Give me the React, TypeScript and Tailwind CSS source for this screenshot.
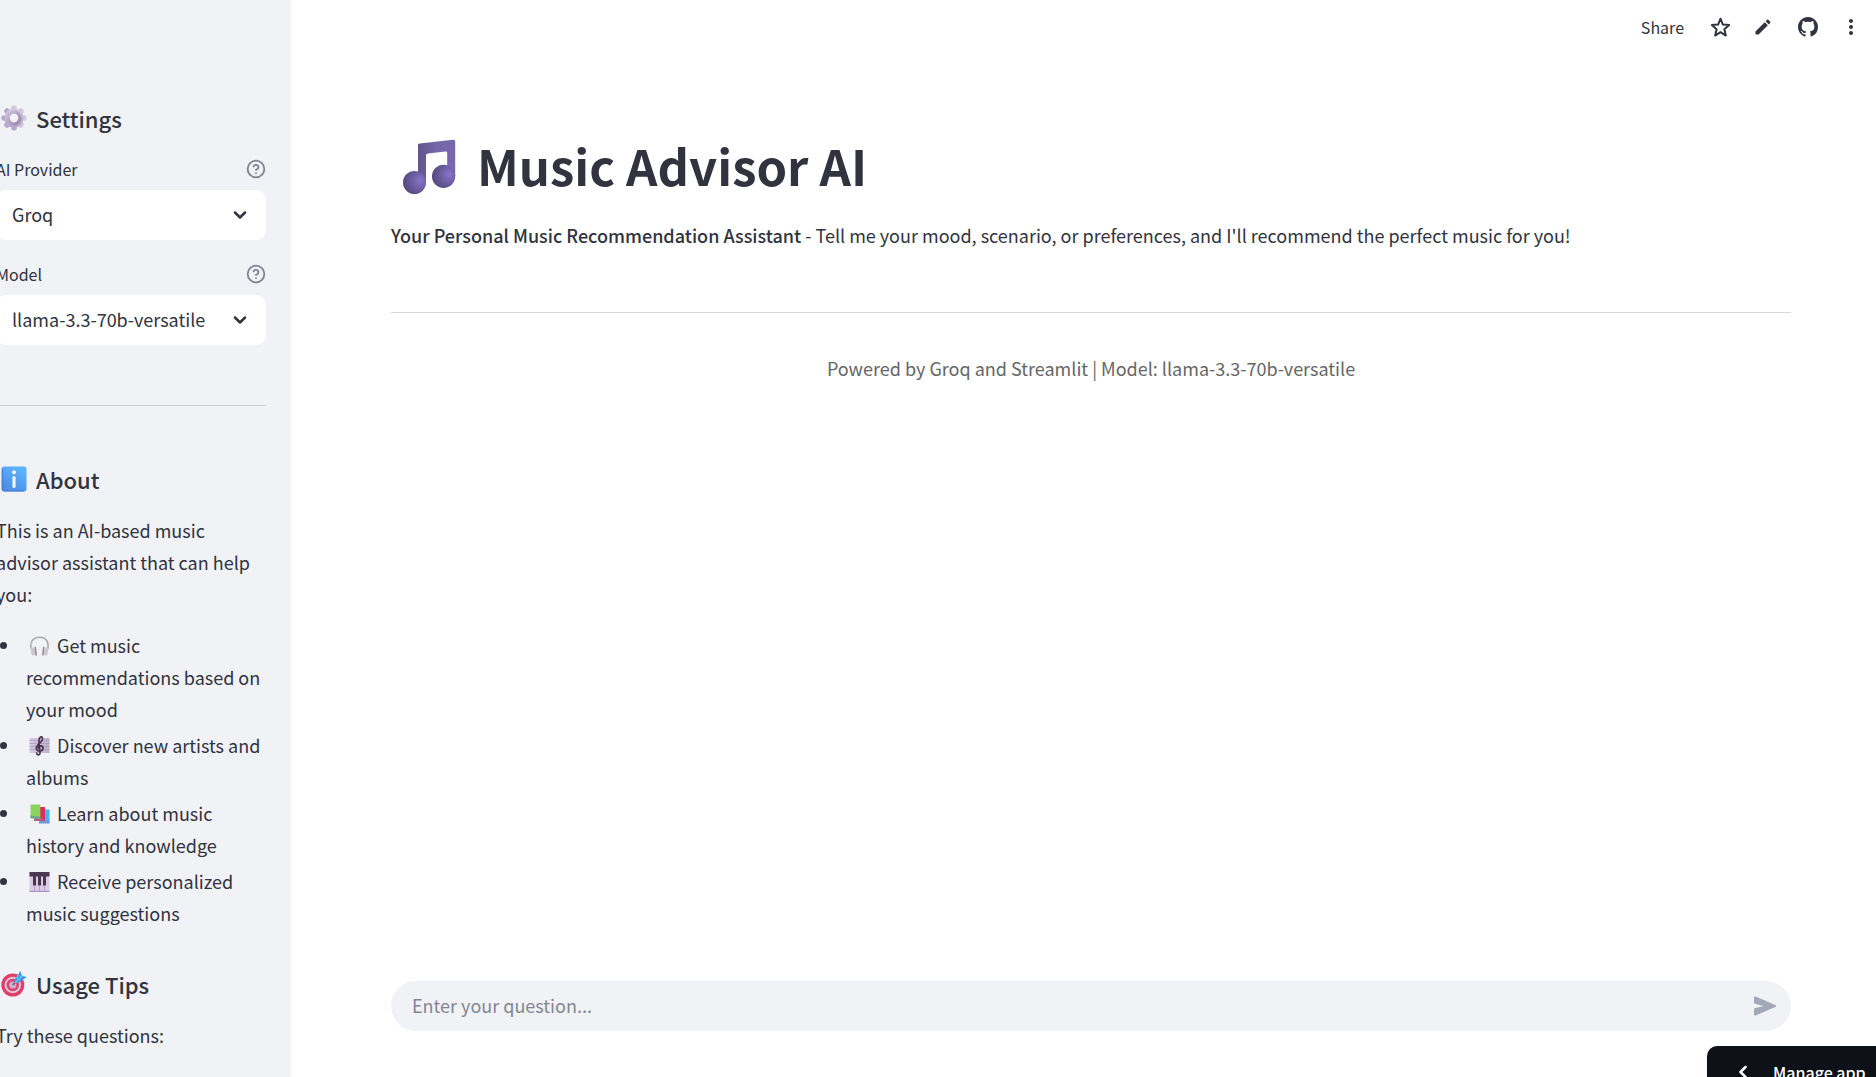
import { useState, type ReactNode } from "react";
import { ChevronDown, ChevronLeft, CircleHelp } from "lucide-react";
import { MdEdit, MdMoreVert } from "react-icons/md";

const MODELS = ["llama-3.3-70b-versatile", "llama-3.1-8b-instant"];
const PROVIDERS = ["Groq", "OpenAI"];

export default function App() {
  const [provider, setProvider] = useState(PROVIDERS[0]);
  const [model, setModel] = useState(MODELS[0]);
  const [question, setQuestion] = useState("");

  return (
    <div className="flex h-screen overflow-hidden bg-white font-['Noto_Sans_CJK_SC','Noto_Sans',sans-serif] text-[18px] leading-8 text-[#31333f]">
      <aside className="w-[291px] shrink-0 overflow-hidden bg-[#f0f2f6] pt-[103px] pr-[25px]">
        <div className="-ml-1">
          <SideHeading icon={<GearIcon />}>Settings</SideHeading>
          <div className="mt-6 space-y-[22px]">
            <Picker id="provider" label="AI Provider" value={provider} options={PROVIDERS} onChange={setProvider} />
            <Picker id="model" label="Model" value={model} options={MODELS} onChange={setModel} />
          </div>

          <hr className="mt-[60px] mb-[58px] border-[#cccfd6]" />

          <SideHeading icon={<InfoIcon />}>About</SideHeading>
          <p className="mt-5">This is an AI-based music advisor assistant that can help you:</p>
          <ul className="mt-[19px] mb-10 list-disc space-y-1 pl-[25px]">
            <Tip icon={<HeadphonesIcon />}>Get music recommendations based on your mood</Tip>
            <Tip icon={<ScoreIcon />}>Discover new artists and albums</Tip>
            <Tip icon={<BooksIcon />}>Learn about music history and knowledge</Tip>
            <Tip icon={<PianoIcon />}>Receive personalized music suggestions</Tip>
          </ul>

          <SideHeading icon={<TargetIcon />}>Usage Tips</SideHeading>
          <p className="mt-5">Try these questions:</p>
        </div>
      </aside>

      <div className="relative flex min-w-0 flex-1 flex-col">
        <header className="flex h-[54px] shrink-0 items-center justify-end gap-[21px] pr-[13px]">
          <button className="text-[16px] leading-6">Share</button>
          <button aria-label="Favorite" className="ml-1">
            <StarIcon />
          </button>
          <button aria-label="Edit">
            <MdEdit size={20} />
          </button>
          <button aria-label="View source" className="pl-1">
            <GithubIcon />
          </button>
          <button aria-label="Menu">
            <MdMoreVert size={24} />
          </button>
        </header>

        <main className="flex-1 pt-[78px] pr-[85px] pl-[100px]">
          <h1 className="flex items-center gap-[21px] pl-3 text-[49px] leading-[66px] font-bold">
            <NoteIcon />
            Music Advisor AI
          </h1>
          <p className="mt-[21px]">
            <strong className="font-medium">Your Personal Music Recommendation Assistant</strong> - Tell me your mood,
            scenario, or preferences, and I'll recommend the perfect music for you!
          </p>
          <hr className="mt-[61px] mb-[39px] border-[#d6d6d8]" />
          <p className="text-center text-[#666666]">Powered by {provider} and Streamlit | Model: {model}</p>
        </main>

        <form onSubmit={(e) => e.preventDefault()} className="pr-[85px] pb-[46px] pl-[100px]">
          <div className="flex h-[50px] items-center rounded-full bg-[#f0f2f6] pr-[13px] pl-[21px]">
            <input
              aria-label="Question"
              value={question}
              onChange={(e) => setQuestion(e.target.value)}
              placeholder="Enter your question..."
              className="min-w-0 flex-1 bg-transparent pb-[3px] outline-none placeholder:text-[#838691]"
            />
            <button aria-label="Send">
              <SendIcon />
            </button>
          </div>
        </form>

        {/* Sticks to the corner, partly below the fold */}
        <button className="absolute right-0 -bottom-5 flex h-[51px] w-[169px] items-center gap-5 rounded-tl-[10px] bg-[#0e1117] pl-[26px] text-[16px] leading-6 font-medium text-white">
          <ChevronLeft size={20} strokeWidth={3} />
          Manage app
        </button>
      </div>
    </div>
  );
}

function SideHeading({ icon, children }: { icon: ReactNode; children: ReactNode }) {
  return (
    <h3 className="flex items-center gap-[9px] pl-[5px] text-[22px] leading-[30px] font-medium">
      {icon}
      {children}
    </h3>
  );
}

function Tip({ icon, children }: { icon: ReactNode; children: ReactNode }) {
  return (
    <li className="pl-[5px]">
      <span className="mr-[7px] ml-[3px] inline-block pb-1 align-middle">{icon}</span>
      {children}
    </li>
  );
}

type PickerProps = {
  id: string;
  label: string;
  value: string;
  options: string[];
  onChange: (v: string) => void;
};

function Picker({ id, label, value, options, onChange }: PickerProps) {
  return (
    <div>
      <div className="flex items-center justify-between text-[16px] leading-6">
        <label htmlFor={id}>{label}</label>
        <CircleHelp size={20} strokeWidth={2.2} className="text-[#808391]" />
      </div>
      <div className="relative mt-[9px]">
        <select
          id={id}
          value={value}
          onChange={(e) => onChange(e.target.value)}
          className="h-[50px] w-full appearance-none rounded-[10px] bg-white pr-12 pb-[3px] pl-4 outline-none"
        >
          {options.map((o) => (
            <option key={o}>{o}</option>
          ))}
        </select>
        <ChevronDown size={20} strokeWidth={3} className="pointer-events-none absolute top-[15px] right-4" />
      </div>
    </div>
  );
}

function StarIcon() {
  return (
    <svg width="23" height="23" viewBox="0 0 22 22" fill="none" stroke="currentColor" strokeWidth="1.9" strokeLinejoin="round">
      <path d="M11 2.6l2.3 5.6 6 .5-4.6 4 1.4 6L11 15.5l-5.1 3.2 1.4-6-4.6-4 6-.5z" />
    </svg>
  );
}

function GithubIcon() {
  return (
    <svg width="20" height="20" viewBox="0 0 16 16" fill="currentColor">
      <path d="M8 0C3.58 0 0 3.58 0 8c0 3.54 2.29 6.53 5.47 7.59.4.07.55-.17.55-.38 0-.19-.01-.82-.01-1.49-2.01.37-2.53-.49-2.69-.94-.09-.23-.48-.94-.82-1.13-.28-.15-.68-.52-.01-.53.63-.01 1.08.58 1.23.82.72 1.21 1.87.87 2.33.66.07-.52.28-.87.51-1.07-1.78-.2-3.64-.89-3.64-3.95 0-.87.31-1.59.82-2.15-.08-.2-.36-1.02.08-2.12 0 0 .67-.21 2.2.82.64-.18 1.32-.27 2-.27s1.36.09 2 .27c1.53-1.04 2.2-.82 2.2-.82.44 1.1.16 1.92.08 2.12.51.56.82 1.27.82 2.15 0 3.07-1.87 3.75-3.65 3.95.29.25.54.73.54 1.48 0 1.07-.01 1.93-.01 2.2 0 .21.15.46.55.38A8.01 8.01 0 0 0 16 8c0-4.42-3.58-8-8-8z" />
    </svg>
  );
}

function SendIcon() {
  return (
    <svg width="26" height="26" viewBox="0 0 26 26" fill="#a3a8b8">
      <path d="M2 4.6c0-.9.8-1.4 1.6-1.1l19.7 8.4c1 .5 1 1.7 0 2.2L3.6 22.5c-.8.3-1.6-.2-1.6-1.1v-5.2c0-.5.3-.9.8-1L11.5 13 2.8 10.8c-.5-.1-.8-.5-.8-1z" />
    </svg>
  );
}

function NoteIcon() {
  return (
    <svg width="53" height="59" viewBox="0 -3 53 59">
      <defs>
        <linearGradient id="note-stem" x1="0" x2="1">
          <stop offset="0" stopColor="#62548f" />
          <stop offset=".5" stopColor="#7367a8" />
          <stop offset="1" stopColor="#7768ad" />
        </linearGradient>
        <radialGradient id="note-head" cx=".75" cy=".42" r=".75">
          <stop offset="0" stopColor="#8676cc" />
          <stop offset=".55" stopColor="#6a5b9e" />
          <stop offset="1" stopColor="#54497a" />
        </radialGradient>
      </defs>
      <path d="M15 6.2c0-1 .6-1.6 1.6-1.7L50 .7c1.3-.2 2.2.4 2.2 1.7V37h-8V14.2c0-1.2-.7-1.8-2-1.6l-17.2 2c-1.3.2-2 .8-2 2V44H15z" fill="url(#note-stem)" />
      <circle cx="11.5" cy="43.5" r="11.5" fill="url(#note-head)" />
      <circle cx="40.6" cy="37.3" r="11.6" fill="url(#note-head)" />
    </svg>
  );
}

function GearIcon() {
  return (
    <svg width="26" height="26" viewBox="0 0 26 26">
      <defs>
        <linearGradient id="gear" x1="0" y1="0" x2="0" y2="1">
          <stop offset="0" stopColor="#d3cbdf" />
          <stop offset="1" stopColor="#b6a2cf" />
        </linearGradient>
        <linearGradient id="gear-in" x1="0" y1="0" x2="1" y2="1">
          <stop offset="0" stopColor="#c9bfd3" />
          <stop offset="1" stopColor="#9686a6" />
        </linearGradient>
      </defs>
      <g fill="url(#gear)">
        {[0, 45, 90, 135].map((a) => (
          <rect key={a} x="10.2" y=".5" width="5.6" height="25" rx="2.2" transform={`rotate(${a} 13 13)`} />
        ))}
        <circle cx="13" cy="13" r="9.6" />
      </g>
      <circle cx="13" cy="13" r="6" fill="none" stroke="url(#gear-in)" strokeWidth="3" />
      <circle cx="13" cy="13" r="4.2" fill="#f0f2f6" />
    </svg>
  );
}

function InfoIcon() {
  return (
    <svg width="26" height="26" viewBox="0 0 26 26">
      <defs>
        <linearGradient id="info" x1="0" y1="1" x2=".6" y2="0">
          <stop offset="0" stopColor="#4a86e0" />
          <stop offset="1" stopColor="#5cb3fb" />
        </linearGradient>
      </defs>
      <rect x=".5" y=".5" width="25" height="25" rx="2.5" fill="url(#info)" />
      <path d="M1.5 3v20M3 24.8h20" stroke="#4477d8" strokeWidth="1.2" opacity=".7" />
      <circle cx="13" cy="6.3" r="2" fill="#f1f3fc" />
      <rect x="11.4" y="10" width="3.2" height="12" rx="1.6" fill="#f1f3fc" />
    </svg>
  );
}

function HeadphonesIcon() {
  return (
    <svg width="21" height="20" viewBox="0 0 21 20">
      <path d="M3 15C0 7 3.5 1.3 10.5 1.3S21 7 18 15" fill="none" stroke="#aaa5ad" strokeWidth="1.6" />
      <path d="M3 13C1 7 4.5 2 10.5 2" fill="none" stroke="#d5d1d8" strokeWidth=".7" />
      <g fill="#cbc6cf">
        <rect x="2" y="11.5" width="3.6" height="8" rx="1.5" transform="rotate(-8 4 15)" />
        <rect x="15.4" y="11.5" width="3.6" height="8" rx="1.5" transform="rotate(8 17 15)" />
      </g>
      <path d="M6.3 11.5l.8 7.5M14.7 11.5l-.8 7.5" stroke="#918a96" strokeWidth="1.6" strokeLinecap="round" />
    </svg>
  );
}

function ScoreIcon() {
  return (
    <svg width="21" height="20" viewBox="0 0 21 20">
      <defs>
        <linearGradient id="score">
          <stop offset="0" stopColor="#d8c9e8" />
          <stop offset="1" stopColor="#bdb2c6" />
        </linearGradient>
      </defs>
      <rect x=".5" y="2" width="20" height="15" fill="url(#score)" />
      <path d="M.5 4.5h20M.5 7.5h20M.5 10.5h20M.5 13.5h20" stroke="#a091b2" strokeWidth=".6" />
      <path
        d="M7.6 17.2c.3 2.4 3.5 2.3 3.4-.3L10 6.2C9.8 3 10.8.8 12.2.8c1.8 0 1.7 3.5-.4 5.4-2.2 2-4.5 3.4-4.5 5.8 0 4.2 6.7 3.8 6.7.3 0-3.2-4.6-3-4.6-.2"
        fill="none"
        stroke="#483450"
        strokeWidth="1.7"
        strokeLinecap="round"
      />
    </svg>
  );
}

function BooksIcon() {
  return (
    <svg width="21" height="20" viewBox="0 0 21 20">
      <path d="M10 5.5h10.5V19H10z" fill="#3fb9f3" />
      <path d="M10 17h10.5v2.5H10z" fill="#7397dc" />
      <path d="M5 3h11v14H5z" fill="#e02d5d" />
      <path d="M5 14.5h10V17H5z" fill="#b45b86" />
      <path d="M1.5.5h9.8v14H1.5z" fill="#8cd35c" />
      <path d="M1.5 11.5l9.8 1.2v2.3L1.5 14z" fill="#6ba58d" />
    </svg>
  );
}

function PianoIcon() {
  return (
    <svg width="21" height="20" viewBox="0 0 21 20">
      <path d="M.5 0h20v20H.5z" fill="#dacbe7" />
      <path d="M.5 18.8h20V20H.5z" fill="#a797ba" />
      <path d="M5.5 14v5M10.5 14v5M15.5 14v5" stroke="#b4a3c5" />
      <path d="M.5 0h20v4.5H.5zM4 4h3v9.5H4zM9 4h3v9.5H9zM14 4h3v9.5h-3z" fill="#48374f" />
    </svg>
  );
}

function TargetIcon() {
  return (
    <svg width="26" height="26" viewBox="0 0 26 26">
      <circle cx="11.8" cy="14" r="11.5" fill="#e23c68" />
      <circle cx="11.8" cy="14" r="8.3" fill="#dcc6d9" />
      <circle cx="11.8" cy="14" r="6.2" fill="#dc4371" />
      <circle cx="11.8" cy="14" r="3.6" fill="#cbb3cb" />
      <path d="M11.8 14l6-6" stroke="#8b6884" strokeWidth="2" />
      <path d="M13 9.5L19.5 0l1.3 4.8L25.7 6l-9.2 6.5z" fill="#389ce5" />
      <path d="M14 12l7.5-7.5M16 7.5l1-3.5" stroke="#75c6f4" strokeWidth="1.3" />
    </svg>
  );
}
